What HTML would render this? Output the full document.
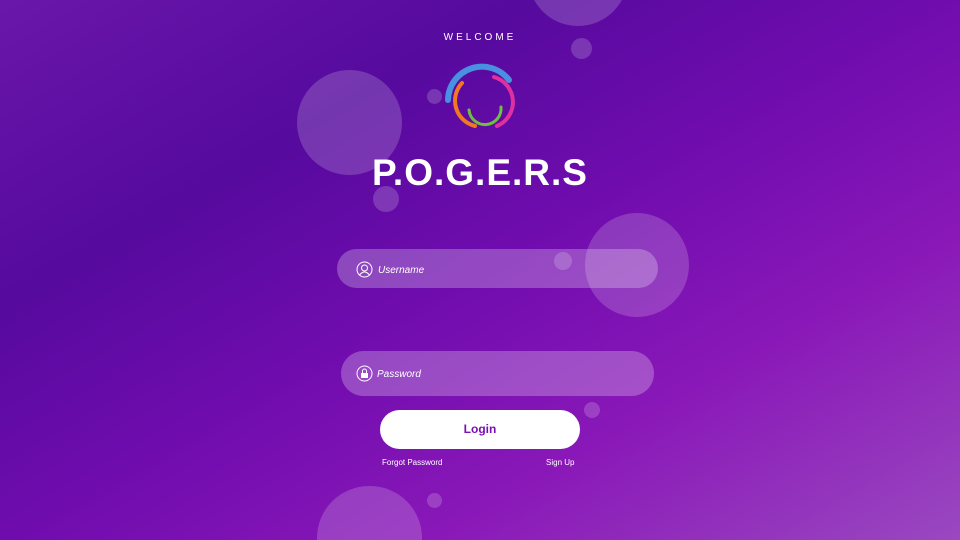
<!DOCTYPE html>
<html><head><style>
html,body{margin:0;padding:0;width:960px;height:540px;overflow:hidden}
body{position:relative;font-family:"Liberation Sans",sans-serif;
background:linear-gradient(150deg,#6a16aa 0%,#560a9e 28%,#700cae 50%,#8a18b8 72%,#9a48c0 100%);}
.c{position:absolute;border-radius:50%;background:rgba(255,255,255,0.18)}
.t{position:absolute;color:#fff}
.in{position:absolute;border-radius:20px;background:rgba(255,255,255,0.25)}
</style></head><body>
<div style="position:absolute;left:0;top:0;width:960px;height:540px;overflow:hidden">
<div class="c" style="left:528px;top:-50px;width:100px;height:76px;border-radius:0 0 50px 50px"></div>
<div class="c" style="left:571px;top:38px;width:21px;height:21px"></div>
<div class="c" style="left:427px;top:89px;width:15px;height:15px"></div>
<div class="c" style="left:297px;top:70px;width:105px;height:105px"></div>
<div class="c" style="left:373px;top:186px;width:26px;height:26px"></div>
<div class="t" style="left:0;width:960px;top:32px;text-align:center;font-size:10px;letter-spacing:3px">WELCOME</div>
<svg style="position:absolute;left:0;top:0" width="960" height="540">
<g fill="none" stroke-linecap="round">
<path d="M448 100 A34 34 0 0 1 509 80" stroke="#4a90e0" stroke-width="6"/>
<path d="M494 77 A26 26 0 0 1 497 126" stroke="#e030a0" stroke-width="4"/>
<path d="M462 83 A26 26 0 0 0 475 126" stroke="#f07820" stroke-width="4"/>
<path d="M469 110 A15 15 0 0 0 501 107" stroke="#70c040" stroke-width="3"/>
</g></svg>
<div class="t" style="left:0;width:960px;top:152px;text-align:center;font-size:37px;font-weight:bold;letter-spacing:1px">P.O.G.E.R.S</div>
<div class="in" style="left:337px;top:249px;width:321px;height:39px"></div>
<div class="c" style="left:585px;top:213px;width:104px;height:104px"></div>
<div class="c" style="left:554px;top:252px;width:18px;height:18px"></div>
<div class="in" style="left:341px;top:351px;width:313px;height:45px;border-radius:23px"></div>
<svg style="position:absolute;left:356px;top:261px" width="17" height="17"><circle cx="8.5" cy="8.5" r="7.5" fill="none" stroke="#fff" stroke-width="1"/><circle cx="8.5" cy="7" r="3" fill="none" stroke="#fff"/><path d="M3.5 14 Q8.5 8 13.5 14" fill="none" stroke="#fff"/></svg>
<div class="t" style="left:378px;top:265px;font-size:10px;font-style:italic">Username</div>
<svg style="position:absolute;left:356px;top:365px" width="17" height="17"><circle cx="8.5" cy="8.5" r="7.5" fill="none" stroke="#fff"/><rect x="5" y="8" width="7" height="5" fill="#fff"/><path d="M6.5 8 V6 A2 2 0 0 1 10.5 6 V8" fill="none" stroke="#fff"/></svg>
<div class="t" style="left:377px;top:369px;font-size:10px;font-style:italic">Password</div>
<div class="c" style="left:584px;top:402px;width:16px;height:16px"></div>
<div style="position:absolute;left:380px;top:410px;width:200px;height:39px;border-radius:20px;background:#fff;color:#7a10b4;font-weight:bold;font-size:12px;text-align:center;line-height:39px">Login</div>
<div class="t" style="left:382px;top:458px;font-size:8px">Forgot Password</div>
<div class="t" style="left:546px;top:458px;font-size:8px">Sign Up</div>
<div class="c" style="left:427px;top:493px;width:15px;height:15px"></div>
<div class="c" style="left:317px;top:486px;width:105px;height:54px;border-radius:52px 52px 0 0"></div>
</div>
</body></html>
